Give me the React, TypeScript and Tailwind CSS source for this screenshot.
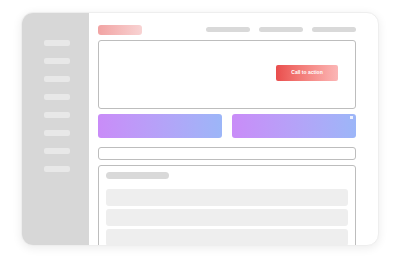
const sideItems = [0, 1, 2, 3, 4, 5, 6, 7];

const App = () => {
  return (
    <div className="w-[407px] h-[271px] bg-white pl-[21px] pt-[12px] font-['Liberation_Sans',sans-serif]">
      <div className="flex w-[358px] h-[234px] overflow-hidden rounded-[12px] border border-[#eeeeee] bg-white shadow-[0_2px_10px_rgba(0,0,0,0.08)]">
        {/* sidebar */}
        <div className="w-[67px] shrink-0 bg-[#d7d7d7] flex flex-col items-center gap-[12px] pt-[27px] pl-[2px]">
          {sideItems.map((i) => (
            <div key={i} className="w-[26px] h-[6px] rounded-[2px] bg-[#e8e8e8]" />
          ))}
        </div>

        {/* main */}
        <div className="flex-1 flex flex-col pl-[9px] pr-[22px] pt-[11px]">
          <div className="h-[11px] shrink-0 flex items-center justify-between">
            <div className="w-[44px] h-[10px] rounded-[3px] bg-gradient-to-r from-[#f1a3a3] to-[#f8d3d3]" />
            <div className="flex items-center gap-[9px]">
              <div className="w-[44px] h-[5px] rounded-full bg-[#d9d9d9]" />
              <div className="w-[44px] h-[5px] rounded-full bg-[#d9d9d9]" />
              <div className="w-[44px] h-[5px] rounded-full bg-[#d9d9d9]" />
            </div>
          </div>

          <div className="mt-[5px] h-[69px] shrink-0 rounded-[3px] border border-[#bdbdbd] flex items-center justify-end pr-[17px] pb-[4px]">
            <button
              type="button"
              className="w-[62px] h-[16px] rounded-[2px] bg-gradient-to-r from-[#e94d4d] to-[#fbb6b6] text-white text-[5px] font-bold flex items-center justify-center"
            >
              Call to action
            </button>
          </div>

          <div className="mt-[5px] shrink-0 grid grid-cols-2 gap-[10px]">
            <div className="h-[24px] rounded-[3px] bg-gradient-to-r from-[#c98cf8] to-[#9cb6f8]" />
            <div className="relative h-[24px] rounded-[3px] bg-gradient-to-r from-[#c98cf8] to-[#9cb6f8]">
              <span className="absolute top-[2px] right-[3px] w-[3px] h-[3px] bg-white/80" />
            </div>
          </div>

          <div className="mt-[9px] h-[13px] shrink-0 rounded-[3px] border border-[#bdbdbd]" />

          <div className="mt-[5px] h-[100px] shrink-0 rounded-[3px] border border-[#bdbdbd] px-[7px] pt-[6px]">
            <div className="w-[63px] h-[7px] rounded-full bg-[#d9d9d9]" />
            <div className="mt-[10px] flex flex-col gap-[3px]">
              <div className="h-[17px] rounded-[3px] bg-[#eeeeee]" />
              <div className="h-[17px] rounded-[3px] bg-[#eeeeee]" />
              <div className="h-[17px] rounded-[3px] bg-[#eeeeee]" />
            </div>
          </div>
        </div>
      </div>
    </div>
  );
};

export default App;
